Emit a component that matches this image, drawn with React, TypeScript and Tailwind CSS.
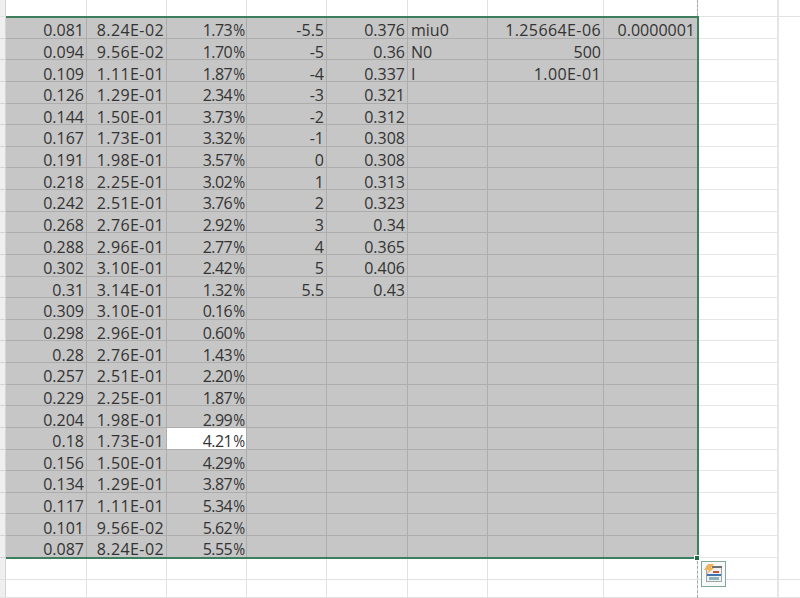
const rows: string[][] = [
  ['0.081', '8.24E-02', '1.73', '-5.5', '0.376', 'miu0', '1.25664E-06', '0.0000001'],
  ['0.094', '9.56E-02', '1.70', '-5', '0.36', 'N0', '500', ''],
  ['0.109', '1.11E-01', '1.87', '-4', '0.337', 'I', '1.00E-01', ''],
  ['0.126', '1.29E-01', '2.34', '-3', '0.321', '', '', ''],
  ['0.144', '1.50E-01', '3.73', '-2', '0.312', '', '', ''],
  ['0.167', '1.73E-01', '3.32', '-1', '0.308', '', '', ''],
  ['0.191', '1.98E-01', '3.57', '0', '0.308', '', '', ''],
  ['0.218', '2.25E-01', '3.02', '1', '0.313', '', '', ''],
  ['0.242', '2.51E-01', '3.76', '2', '0.323', '', '', ''],
  ['0.268', '2.76E-01', '2.92', '3', '0.34', '', '', ''],
  ['0.288', '2.96E-01', '2.77', '4', '0.365', '', '', ''],
  ['0.302', '3.10E-01', '2.42', '5', '0.406', '', '', ''],
  ['0.31', '3.14E-01', '1.32', '5.5', '0.43', '', '', ''],
  ['0.309', '3.10E-01', '0.16', '', '', '', '', ''],
  ['0.298', '2.96E-01', '0.60', '', '', '', '', ''],
  ['0.28', '2.76E-01', '1.43', '', '', '', '', ''],
  ['0.257', '2.51E-01', '2.20', '', '', '', '', ''],
  ['0.229', '2.25E-01', '1.87', '', '', '', '', ''],
  ['0.204', '1.98E-01', '2.99', '', '', '', '', ''],
  ['0.18', '1.73E-01', '4.21', '', '', '', '', ''],
  ['0.156', '1.50E-01', '4.29', '', '', '', '', ''],
  ['0.134', '1.29E-01', '3.87', '', '', '', '', ''],
  ['0.117', '1.11E-01', '5.34', '', '', '', '', ''],
  ['0.101', '9.56E-02', '5.62', '', '', '', '', ''],
  ['0.087', '8.24E-02', '5.55', '', '', '', '', ''],
]

const widths = ['w-[81px]', 'w-[80px]', 'w-[80px]', 'w-[80px]', 'w-[81px]', 'w-[80px]', 'w-[116px]', 'w-[94px]']

function BlankRow({ height }: { height: string }) {
  return (
    <div className={`flex ${height} border-b border-[#e2e2e2]`}>
      <div className="w-[6px] shrink-0 bg-[#efefef] border-r border-[#d4d4d4]" />
      {widths.map((w, i) => (
        <div key={i} className={`${w} shrink-0 border-r border-[#e2e2e2]`} />
      ))}
      <div className="w-[81px] shrink-0 border-r-2 border-[#e6e6e6]" />
    </div>
  )
}

function ExportIcon() {
  return (
    <svg width="25" height="26" viewBox="0 0 25 26" className="block">
      <rect x="0.5" y="0.5" width="24" height="25" fill="#f7f9f8" stroke="#7fa896" />
      <rect x="5.5" y="5.5" width="15" height="15" fill="#eef1f2" stroke="#8a8f92" strokeWidth="0.8" />
      <rect x="11" y="5" width="10" height="2" fill="#6b6f72" />
      <rect x="12" y="10" width="6" height="2" fill="#c0573f" />
      <rect x="6" y="13" width="14" height="2" fill="#3f74ad" />
      <rect x="8" y="16" width="10" height="3" fill="#8db3ba" />
      <path d="M7 3 L13 3 L10 7 L13 7 L5 14 L8 9 L3 9 Z" fill="#f0b35a" />
    </svg>
  )
}

export default function App() {
  return (
    <div className="relative w-[800px] h-[598px] overflow-hidden bg-white text-[#333] text-[16px] leading-none font-['Open_Sans','Liberation_Sans',sans-serif]">
      <BlankRow height="h-[17px]" />
      <div className="flex flex-col">
        {rows.map((row, r) => (
          <div key={r} className="flex h-[21.64px]">
            <div className="w-[6px] shrink-0 bg-[#efefef] border-r border-b border-[#d4d4d4]" />
            {row.map((val, c) => {
              const active = r === 19 && c === 2
              const left = c === 5
              return (
                <div
                  key={c}
                  className={`${widths[c]} shrink-0 flex items-center pt-[6px] border-r border-b border-[#adadad] ${active ? 'bg-white' : 'bg-[#c6c6c6]'} ${left ? 'justify-start pl-[3px]' : 'justify-end pr-[2px]'} ${val.includes('E') ? 'tracking-[0.4px]' : ''}`}
                >
                  {c === 2 ? (
                    <span className="flex">
                      <span className="tracking-[-0.6px]">{val}</span>
                      <span className="block w-[12px] scale-x-[0.9] origin-right text-right">%</span>
                    </span>
                  ) : (
                    val
                  )}
                </div>
              )
            })}
            <div className="w-[81px] shrink-0 border-r-2 border-b border-[#e6e6e6]" />
          </div>
        ))}
      </div>
      <BlankRow height="h-[22px]" />
      <BlankRow height="h-[18px]" />

      {/* selection outline */}
      <div className="absolute left-[6px] top-[16px] w-[693px] h-[543px] border-2 border-[#3f7f5f] border-l-0 pointer-events-none" />
      <div className="absolute left-[694px] top-[555px] w-[6px] h-[6px] bg-[#1f6b45] border border-white" />
      {/* page break lines */}
      <div className="absolute left-[697px] top-0 h-[16px] border-l border-dashed border-[#a8a8a8]" />
      <div className="absolute left-[697px] top-[561px] h-[37px] border-l border-dashed border-[#a8a8a8]" />
      {/* quick analysis button */}
      <div className="absolute left-[701px] top-[561px]">
        <ExportIcon />
      </div>
    </div>
  )
}
